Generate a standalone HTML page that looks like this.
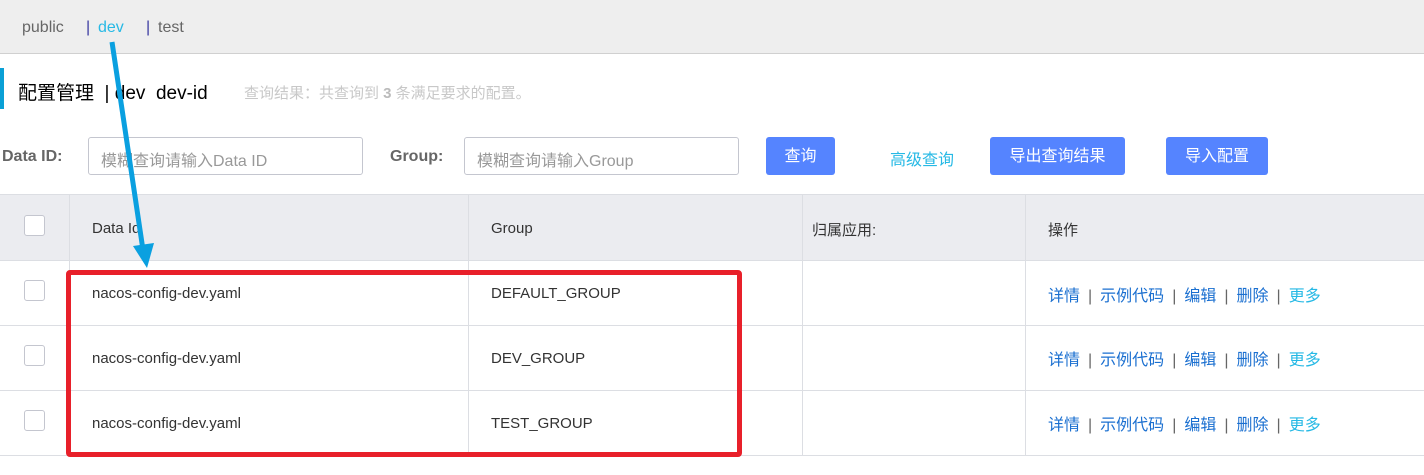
<!DOCTYPE html><html><head><meta charset="utf-8"><style>
*{margin:0;padding:0;box-sizing:border-box}
body{width:1424px;height:475px;background:#fff;font-family:"Liberation Sans","Noto Sans CJK SC",sans-serif;position:relative;overflow:hidden;color:#333}
.a{position:absolute;white-space:nowrap}
.top{position:absolute;left:0;top:0;width:1424px;height:54px;background:#eeeeee;border-bottom:1px solid #d0d0d0}
.inp{position:absolute;height:38px;border:1px solid #c4c6cf;border-radius:3px;font-size:15px;color:#999;padding:9px 12px}
.btn{position:absolute;height:38px;background:#5584ff;border-radius:3px;color:#fff;font-size:15px;text-align:center;line-height:40px}
.th{position:absolute;top:194px;height:66px;background:#ebecf0}
.vl{position:absolute;width:1px;background:#dcdee3}
.hl{position:absolute;height:1px;background:#dcdee3;left:0;width:1424px}
.cb{position:absolute;left:24px;width:21px;height:21px;border:1px solid #c4c6cf;border-radius:3px;background:#fff}
.t{font-size:15px;color:#333}
.op{font-size:16px;color:#1a6fd0}
.op span{color:#666;margin:0 8px}
.op b{font-weight:normal;color:#26b9e5}
</style></head><body>
<div class="top"></div>
<div class="a" style="left:22px;top:19px;font-size:16px;color:#666">public</div>
<div class="a" style="left:86px;top:19px;font-size:16px;color:#3a3aa0">|</div>
<div class="a" style="left:98px;top:19px;font-size:16px;color:#26b9e5">dev</div>
<div class="a" style="left:146px;top:19px;font-size:16px;color:#3a3aa0">|</div>
<div class="a" style="left:158px;top:19px;font-size:16px;color:#666">test</div>
<div class="a" style="left:0;top:68px;width:4px;height:41px;background:#0aa0d6"></div>
<div class="a" style="left:18px;top:78px;font-size:19px;color:#000">配置管理 &nbsp;|&nbsp;dev&nbsp; dev-id</div>
<div class="a" style="left:244px;top:82px;font-size:15px;color:#c8c8c8">查询结果：共查询到 <b style="color:#bbb">3</b> 条满足要求的配置。</div>
<div class="a" style="left:2px;top:148px;font-size:16px;font-weight:bold;color:#666">Data ID:</div>
<div class="inp" style="left:88px;top:137px;width:275px;font-size:16px">模糊查询请输入Data ID</div>
<div class="a" style="left:390px;top:148px;font-size:16px;font-weight:bold;color:#666">Group:</div>
<div class="inp" style="left:464px;top:137px;width:275px;font-size:16px">模糊查询请输入Group</div>
<div class="btn" style="left:766px;top:137px;width:69px;font-size:16px">查询</div>
<div class="a" style="left:890px;top:146px;font-size:16px;color:#26b9e5">高级查询</div>
<div class="btn" style="left:990px;top:137px;width:135px;font-size:16px">导出查询结果</div>
<div class="btn" style="left:1166px;top:137px;width:102px;font-size:16px">导入配置</div>
<div class="th" style="left:0;width:1424px"></div>
<div class="hl" style="top:194px"></div>
<div class="hl" style="top:260px"></div>
<div class="hl" style="top:325px"></div>
<div class="hl" style="top:390px"></div>
<div class="hl" style="top:455px"></div>
<div class="vl" style="left:69px;top:194px;height:262px"></div>
<div class="vl" style="left:468px;top:194px;height:262px"></div>
<div class="vl" style="left:802px;top:194px;height:262px"></div>
<div class="vl" style="left:1025px;top:194px;height:262px"></div>
<div class="cb" style="top:215px"></div>
<div class="cb" style="top:280px"></div>
<div class="cb" style="top:345px"></div>
<div class="cb" style="top:410px"></div>
<div class="a t" style="left:92px;top:220px">Data Id</div>
<div class="a t" style="left:491px;top:220px">Group</div>
<div class="a t" style="left:812px;top:219px">归属应用:</div>
<div class="a t" style="left:1048px;top:219px">操作</div>
<div class="a t" style="left:92px;top:285px">nacos-config-dev.yaml</div>
<div class="a t" style="left:491px;top:285px">DEFAULT_GROUP</div>
<div class="a t" style="left:92px;top:350px">nacos-config-dev.yaml</div>
<div class="a t" style="left:491px;top:350px">DEV_GROUP</div>
<div class="a t" style="left:92px;top:415px">nacos-config-dev.yaml</div>
<div class="a t" style="left:491px;top:415px">TEST_GROUP</div>
<div class="a op" style="left:1048px;top:282px">详情<span>|</span>示例代码<span>|</span>编辑<span>|</span>删除<span>|</span><b>更多</b></div>
<div class="a op" style="left:1048px;top:346px">详情<span>|</span>示例代码<span>|</span>编辑<span>|</span>删除<span>|</span><b>更多</b></div>
<div class="a op" style="left:1048px;top:411px">详情<span>|</span>示例代码<span>|</span>编辑<span>|</span>删除<span>|</span><b>更多</b></div>
<div class="a" style="left:66px;top:270px;width:676px;height:187px;border:5px solid #e8202a;border-radius:4px"></div>
<svg class="a" style="left:0;top:0" width="1424" height="475"><line x1="112" y1="42" x2="143" y2="250" stroke="#0aa0e0" stroke-width="5"/><polygon points="133,246 154,243 147,268" fill="#0aa0e0"/></svg>
</body></html>
